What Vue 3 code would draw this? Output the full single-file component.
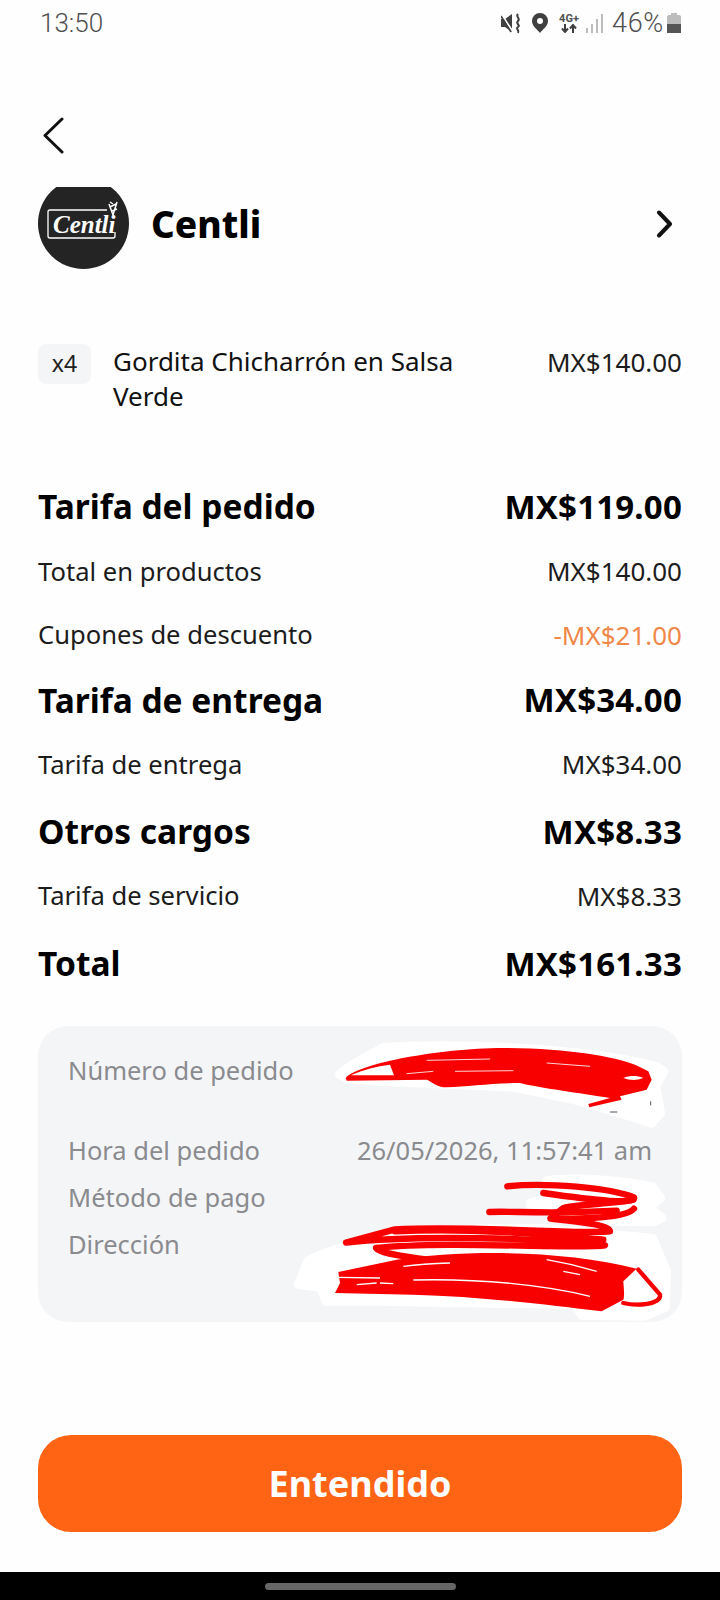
<script setup>
const charges = [
  { label: 'Tarifa del pedido', value: 'MX$119.00', strong: true },
  { label: 'Total en productos', value: 'MX$140.00' },
  { label: 'Cupones de descuento', value: '-MX$21.00', discount: true },
  { label: 'Tarifa de entrega', value: 'MX$34.00', strong: true },
  { label: 'Tarifa de entrega', value: 'MX$34.00' },
  { label: 'Otros cargos', value: 'MX$8.33', strong: true },
  { label: 'Tarifa de servicio', value: 'MX$8.33' },
  { label: 'Total', value: 'MX$161.33', strong: true },
]
</script>

<template>
  <div class="screen">
    <header class="status">
      <span class="time">13:50</span>
      <div class="status-icons">
        <svg class="ic-mute" width="21" height="21" viewBox="0 0 21 21">
          <path d="M0 6h4l7-5v18l-7-5H0z" fill="#3f3f3f" />
          <path d="M1 2l11 17" stroke="#fff" stroke-width="1.800" />
          <path d="M0 3l10 16" stroke="#3f3f3f" stroke-width="1.500" />
          <path d="M17 1c-3 3 3 4 0 7s3 4 0 6 2 3 0 6" fill="none" stroke="#3f3f3f" stroke-width="2" />
        </svg>
        <svg class="ic-pin" width="16" height="20" viewBox="0 0 16 20">
          <path fill-rule="evenodd" d="M8 0a8 8 0 0 1 8 8c0 5-5 8-8 12C5 16 0 13 0 8a8 8 0 0 1 8-8zm0 5a3 3 0 1 0 0 6 3 3 0 0 0 0-6z" fill="#3f3f3f" />
        </svg>
        <div class="net">
          <span>4G+</span>
          <svg width="16" height="9" viewBox="0 0 16 9">
            <path d="M4 0v7M1 4.500L4 8l3-3.500M12 9V2M9 4.500L12 1l3 3.500" fill="none" stroke="#3f3f3f" stroke-width="2" />
          </svg>
        </div>
        <svg class="ic-signal" width="17" height="19" viewBox="0 0 17 19">
          <path d="M0 14h2v5H0zM5 10h2v9H5zM10 5h2v14h-2zM15 0h2v19h-2z" fill="#bdbdbd" />
        </svg>
        <span class="battery-text">46%</span>
        <div class="battery"><div class="battery-fill"></div></div>
      </div>
    </header>

    <button class="back" aria-label="Volver">
      <svg width="22" height="37" viewBox="0 0 22 37">
        <path d="M20 2L3 18.500 20 35" fill="none" stroke="#111" stroke-width="3" stroke-linecap="round" stroke-linejoin="round" />
      </svg>
    </button>

    <section class="store">
      <div class="logo">
        <svg width="91" height="91" viewBox="0 0 91 91">
          <circle cx="45.500" cy="45.500" r="45.500" fill="#242424" />
          <path d="M69 32H12q-2 0-2 2v24q0 2 2 2h63q2 0 2-2v-4" fill="none" stroke="#fff" stroke-width="1.300" />
          <text x="15" y="55" class="logo-text">Centli</text>
          <path d="M71 26l4 11 4-13M72 29l6-3M74 33l5-2M72 24l3 2" fill="none" stroke="#fff" stroke-width="1.500" />
        </svg>
      </div>
      <h1 class="store-name">Centli</h1>
      <svg class="store-arrow" width="18" height="28" viewBox="0 0 18 28">
        <path d="M3 2.500L14 14 3 25.500" fill="none" stroke="#111" stroke-width="4" stroke-linecap="round" stroke-linejoin="round" />
      </svg>
    </section>

    <section class="item">
      <span class="qty">x4</span>
      <p class="item-name">Gordita Chicharrón en Salsa Verde</p>
      <span class="item-price">MX$140.00</span>
    </section>

    <section class="charges">
      <div
        v-for="(row, i) in charges"
        :key="i"
        class="charge"
        :class="{ strong: row.strong, discount: row.discount }"
      >
        <span class="charge-label">{{ row.label }}</span>
        <span class="charge-value">{{ row.value }}</span>
      </div>
    </section>

    <section class="details">
      <div class="detail first"><span>Número de pedido</span></div>
      <div class="detail">
        <span>Hora del pedido</span>
        <span>26/05/2026, 11:57:41 am</span>
      </div>
      <div class="detail"><span>Método de pago</span></div>
      <div class="detail"><span>Dirección</span></div>

      <!-- hand painted redaction over the private values -->
      <svg class="scribble" width="420" height="320" viewBox="0 0 1260 960">
        <g fill="#fff" stroke="#fff" stroke-width="26" stroke-linejoin="round">
          <path d="M178 170C210 135 285 105 310 88C500 76 900 84 1130 145L1152 160L1128 205L1142 285L1115 316L1050 295L880 245L700 208L300 190L200 182Z" />
          <path d="M800 488C900 474 1050 492 1118 506L1142 540L1108 570L1146 600L1120 612L1000 610L752 570L752 555L830 530Z" />
          <path d="M84 728C210 662 500 622 800 632L1118 660L1160 760L1156 868L1095 895L905 892L885 860L300 850L138 850L122 808L55 800Z" />
        </g>
        <path d="M197 180C230 140 450 95 650 90C850 88 1000 115 1065 140L1105 160L1115 185L1100 215L1020 235L1025 245L928 268L925 258L990 240C900 225 780 210 720 195C640 195 560 205 500 208C470 208 455 190 440 185L200 188Z" fill="#f80000" />
        <path d="M212 172C250 155 290 145 330 140L342 172Z" fill="#fff" />
        <path d="M1030 180C1050 172 1070 172 1090 180C1070 188 1050 188 1030 180Z" fill="#fff" />
        <path d="M380 167L460 160M525 160L700 158M440 127L630 123M800 135L930 145" fill="none" stroke="#fff" stroke-width="2.500" />
        <path d="M1112 250v12M990 282h22" stroke="#556" stroke-width="3" />
        <g fill="none" stroke="#f80000" stroke-width="19" stroke-linecap="round" stroke-linejoin="round">
          <path d="M682 505C800 492 990 510 1062 538C1070 560 950 548 790 525" />
          <path d="M1060 545C1000 558 900 558 850 570L812 600C900 605 1040 600 1062 572" />
          <path d="M628 582C700 578 780 590 1010 578" />
          <path d="M812 602C900 612 990 620 990 640C900 650 600 622 345 634L198 674C400 650 800 660 975 682C900 694 500 668 288 690C300 708 380 715 445 726" />
          <path d="M345 640C600 630 800 650 970 665" />
        </g>
        <path d="M350 725C550 695 850 695 1070 752L1030 790C1030 800 1035 830 1030 845L965 880C800 860 600 835 400 830L165 825L180 795L175 762Z" fill="#f80000" />
        <path d="M370 745C420 738 470 736 510 735M800 725C860 735 900 745 950 760M400 786C600 781 800 801 930 835M230 800L290 795M300 795L340 797M170 778L300 780M850 760L900 770" fill="none" stroke="#fff" stroke-width="4" />
        <path d="M1075 755L1140 830C1145 860 1070 865 1030 855" fill="none" stroke="#f80000" stroke-width="13" stroke-linecap="round" stroke-linejoin="round" />
      </svg>
    </section>

    <button class="confirm">Entendido</button>

    <footer class="nav">
      <div class="nav-pill"></div>
    </footer>
  </div>
</template>

<style>
html,
body {
  margin: 0;
  background: #fefefe;
}
</style>

<style scoped>
.screen {
  position: relative;
  display: flex;
  flex-direction: column;
  width: 720px;
  height: 1600px;
  overflow: hidden;
  background: #fefefe;
  color: #111;
  font-family: "Noto Sans", sans-serif;
}
.status {
  display: flex;
  justify-content: space-between;
  align-items: center;
  height: 46px;
  padding: 0 39px 0 40px;
  color: #4f4f4f;
  font-family: Roboto, sans-serif;
  font-weight: 300;
  font-size: 27px;
}
.time {
  font-size: 26px;
}
.status-icons {
  display: flex;
  align-items: center;
}
.ic-pin {
  margin-left: 10px;
}
.net {
  display: flex;
  flex-direction: column;
  align-items: center;
  margin-left: 11px;
  width: 20px;
  font-size: 11px;
  line-height: 10px;
  font-weight: 700;
}
.ic-signal {
  margin-left: 7px;
}
.battery-text {
  margin-left: 9px;
  letter-spacing: 0.7px;
}
.battery {
  position: relative;
  width: 14px;
  height: 18px;
  margin: 2px 0 0 3px;
  border-radius: 2px 2px 0 0;
  background: #bcbcbc;
}
.battery::before {
  content: "";
  position: absolute;
  top: -2px;
  left: 4px;
  width: 6px;
  height: 2px;
  background: #bcbcbc;
}
.battery-fill {
  position: absolute;
  left: 0;
  right: 0;
  bottom: 0;
  height: 9px;
  background: #555;
}
.back {
  display: block;
  align-self: flex-start;
  width: 22px;
  height: 37px;
  margin: 71px 0 0 42px;
  padding: 0;
  border: 0;
  background: none;
}
.store {
  display: flex;
  align-items: center;
  height: 82px;
  margin-top: 33px;
  padding: 0 46px 0 38px;
}
.logo {
  flex: none;
  width: 91px;
  height: 82px;
  overflow: hidden;
}
.logo svg {
  display: block;
  margin-top: -9px;
}
.logo-text {
  fill: #fff;
  font-family: "Liberation Serif", serif;
  font-style: italic;
  font-weight: 700;
  font-size: 25px;
}
.store-name {
  flex: 1;
  margin: 0 0 8px 22px;
  font-size: 37px;
  line-height: 50px;
  font-weight: 800;
  color: #000;
}
.store-arrow {
  flex: none;
  margin-bottom: 8px;
}
.item {
  display: flex;
  align-items: flex-start;
  margin-top: 75px;
  padding: 0 38px;
}
.qty {
  flex: none;
  width: 53px;
  height: 40px;
  border-radius: 8px;
  background: #f4f5f7;
  font-size: 23px;
  line-height: 38px;
  text-align: center;
  color: #222;
}
.item-name {
  width: 370px;
  margin: 0 0 0 22px;
  font-size: 26px;
  line-height: 35px;
}
.item-price {
  margin-left: auto;
  padding-top: 1px;
  font-size: 26px;
  line-height: 35px;
  color: #1c1c1c;
}
.charges {
  display: flex;
  flex-direction: column;
  gap: 26.300px;
  margin-top: 72px;
  padding: 0 38px;
}
.charge {
  display: flex;
  justify-content: space-between;
  align-items: center;
  height: 36px;
  font-size: 25.600px;
  color: #1c1c1c;
}
.charge-value {
  font-size: 26px;
}
.charge.strong {
  height: 40px;
  margin-top: 3px;
  font-size: 33.500px;
  font-weight: 700;
  color: #000;
}
.strong .charge-value {
  font-size: 33px;
  letter-spacing: 0.2px;
}
.charge:first-child {
  margin-top: 0;
}
.charge:nth-child(2) {
  margin-top: 1px;
}
.charge:nth-child(3) {
  margin-top: 1px;
}
.charge:nth-child(4) {
  margin-top: 1px;
}
.discount .charge-value {
  color: #f0884a;
}
.details {
  position: relative;
  height: 296px;
  margin: 43px 38px 0;
  padding: 25px 30px 0;
  box-sizing: border-box;
  border-radius: 30px;
  background: #f4f5f7;
  color: #8a8b8e;
  font-size: 25.500px;
}
.detail {
  display: flex;
  justify-content: space-between;
  height: 38px;
  line-height: 38px;
  margin-bottom: 9px;
}
.detail.first {
  margin-bottom: 42px;
}
.scribble {
  position: absolute;
  left: 242px;
  top: -8px;
}
.confirm {
  display: block;
  height: 97px;
  margin: 113px 38px 0;
  padding: 0;
  border: 0;
  border-radius: 33px;
  background: #ff6414;
  color: #fff;
  font-family: inherit;
  font-size: 36px;
  font-weight: 700;
}
.nav {
  display: flex;
  justify-content: center;
  align-items: center;
  height: 28px;
  margin-top: auto;
  background: #000;
}
.nav-pill {
  width: 191px;
  height: 7px;
  border-radius: 4px;
  background: #666;
}
</style>
